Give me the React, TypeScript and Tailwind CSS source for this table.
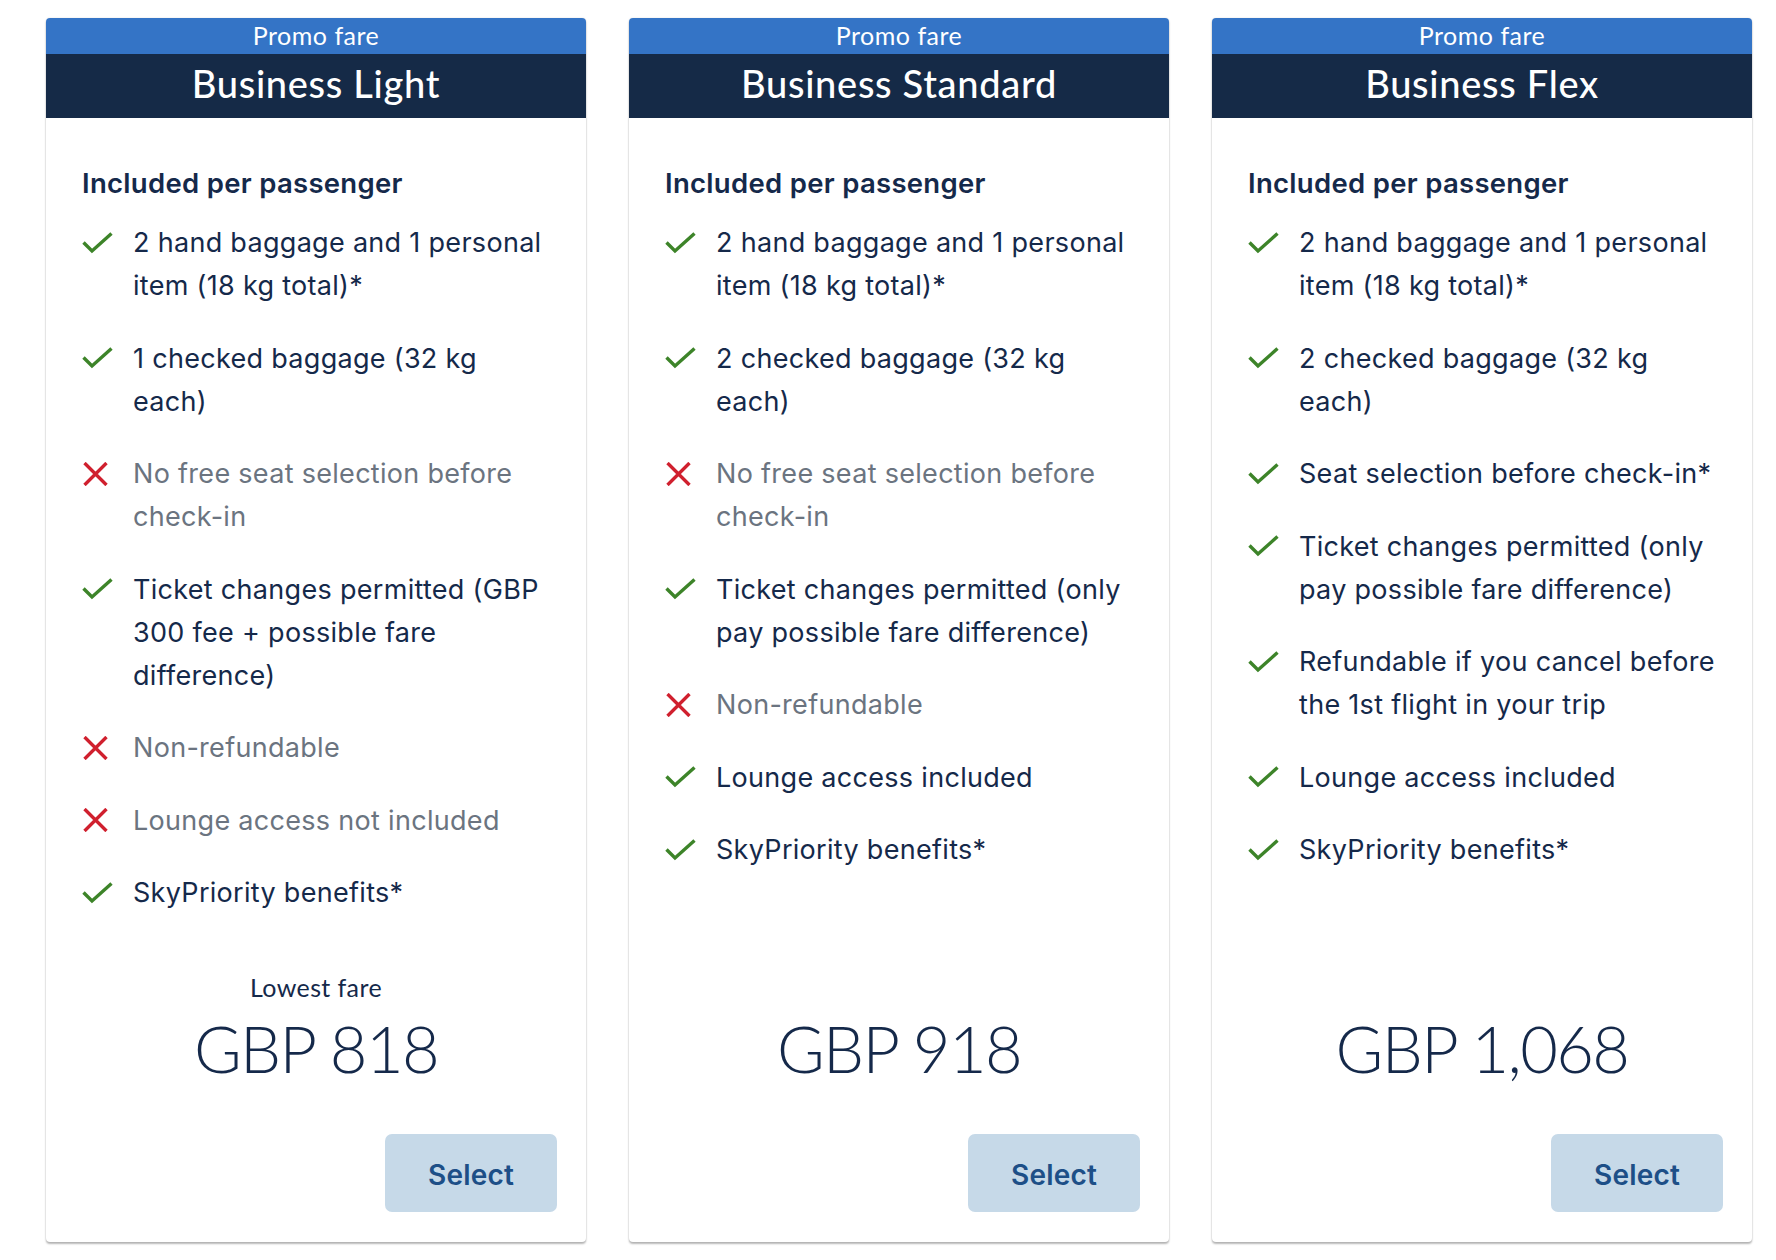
import React from "react";

type Item = { ok: boolean; text: string };

type Fare = {
    name: string;
    items: Item[];
    price: string;
    lowest?: boolean;
};

const fares: Fare[] = [
    {
        name: "Business Light",
        lowest: true,
        price: "GBP 818",
        items: [
            { ok: true, text: "2 hand baggage and 1 personal item (18 kg total)*" },
            { ok: true, text: "1 checked baggage (32 kg each)" },
            { ok: false, text: "No free seat selection before check-in" },
            { ok: true, text: "Ticket changes permitted (GBP 300 fee + possible fare difference)" },
            { ok: false, text: "Non-refundable" },
            { ok: false, text: "Lounge access not included" },
            { ok: true, text: "SkyPriority benefits*" },
        ],
    },
    {
        name: "Business Standard",
        price: "GBP 918",
        items: [
            { ok: true, text: "2 hand baggage and 1 personal item (18 kg total)*" },
            { ok: true, text: "2 checked baggage (32 kg each)" },
            { ok: false, text: "No free seat selection before check-in" },
            { ok: true, text: "Ticket changes permitted (only pay possible fare difference)" },
            { ok: false, text: "Non-refundable" },
            { ok: true, text: "Lounge access included" },
            { ok: true, text: "SkyPriority benefits*" },
        ],
    },
    {
        name: "Business Flex",
        price: "GBP 1,068",
        items: [
            { ok: true, text: "2 hand baggage and 1 personal item (18 kg total)*" },
            { ok: true, text: "2 checked baggage (32 kg each)" },
            { ok: true, text: "Seat selection before check-in*" },
            { ok: true, text: "Ticket changes permitted (only pay possible fare difference)" },
            { ok: true, text: "Refundable if you cancel before the 1st flight in your trip" },
            { ok: true, text: "Lounge access included" },
            { ok: true, text: "SkyPriority benefits*" },
        ],
    },
];

function CheckIcon() {
    return (
        <svg width="31" height="22" viewBox="0 0 31 22" fill="none">
            <path d="M1.5 10.5 L10 19 L29.5 1.5" stroke="#3d8429" strokeWidth="3.4" />
        </svg>
    );
}

function CrossIcon() {
    return (
        <svg width="25" height="24" viewBox="0 0 25 24" fill="none" className="ml-[1px]">
            <path d="M1.5 1 L23.5 23 M23.5 1 L1.5 23" stroke="#d0202e" strokeWidth="3.4" />
        </svg>
    );
}

function FareCard({ fare }: { fare: Fare }) {
    return (
        <div className="w-[540px] min-h-[1224px] flex flex-col bg-white rounded-[4px] overflow-hidden shadow-[0_2px_2px_rgba(0,0,0,0.28),0_0_2px_rgba(0,0,0,0.12)]">
            {/* header */}
            <div className="h-[36px] bg-[#3474c6] flex items-center justify-center text-white text-[25px] tracking-[0.5px] font-['Lato',sans-serif]">
                Promo fare
            </div>
            <div className="h-[64px] bg-[#152a47] flex items-center justify-center pb-[5px] text-white text-[38px] tracking-[0.7px] font-['Lato',sans-serif] font-medium">
                {fare.name}
            </div>

            <div className="pl-[36px] pr-[31px] pt-[47px] font-['Inter',sans-serif]">
                <h3 className="text-[27.5px] leading-[36px] font-semibold text-[#15294a] tracking-[0.3px]">
                    Included per passenger
                </h3>
                <ul className="mt-[20px] flex flex-col gap-[29.5px]">
                    {fare.items.map((item, i) => (
                        <li key={i} className="flex">
                            <div className="w-[51px] shrink-0 h-[43px] flex items-center">
                                {item.ok ? <CheckIcon /> : <CrossIcon />}
                            </div>
                            <span
                                className={
                                    "text-[27px] leading-[43px] tracking-[0.3px] " +
                                    (item.ok ? "text-[#15294a]" : "text-[#6b7480]")
                                }
                            >
                                {item.text}
                            </span>
                        </li>
                    ))}
                </ul>
            </div>

            <div className="mt-auto flex flex-col pb-[30px] text-[#15294a] font-['Lato',sans-serif]">
                {fare.lowest && (
                    <div className="text-center text-[25px] tracking-[0.4px] leading-[30px] mb-[11px]">Lowest fare</div>
                )}
                <div className="text-center text-[65px] leading-[70px] tracking-[-1.6px] font-light">{fare.price}</div>
                <div className="flex justify-end pr-[29px] mt-[51px]">
                    <button className="w-[172px] h-[78px] pt-[3px] rounded-[7px] bg-[#c6d9e8] text-[#1d4f87] text-[28px] tracking-[0.2px] font-semibold font-['Inter',sans-serif]">
                        Select
                    </button>
                </div>
            </div>
        </div>
    );
}

export default function App() {
    return (
        <div className="min-h-screen bg-white pt-[18px] pl-[46px] flex gap-[43px] items-start">
            {fares.map(f => (
                <FareCard key={f.name} fare={f} />
            ))}
        </div>
    );
}
